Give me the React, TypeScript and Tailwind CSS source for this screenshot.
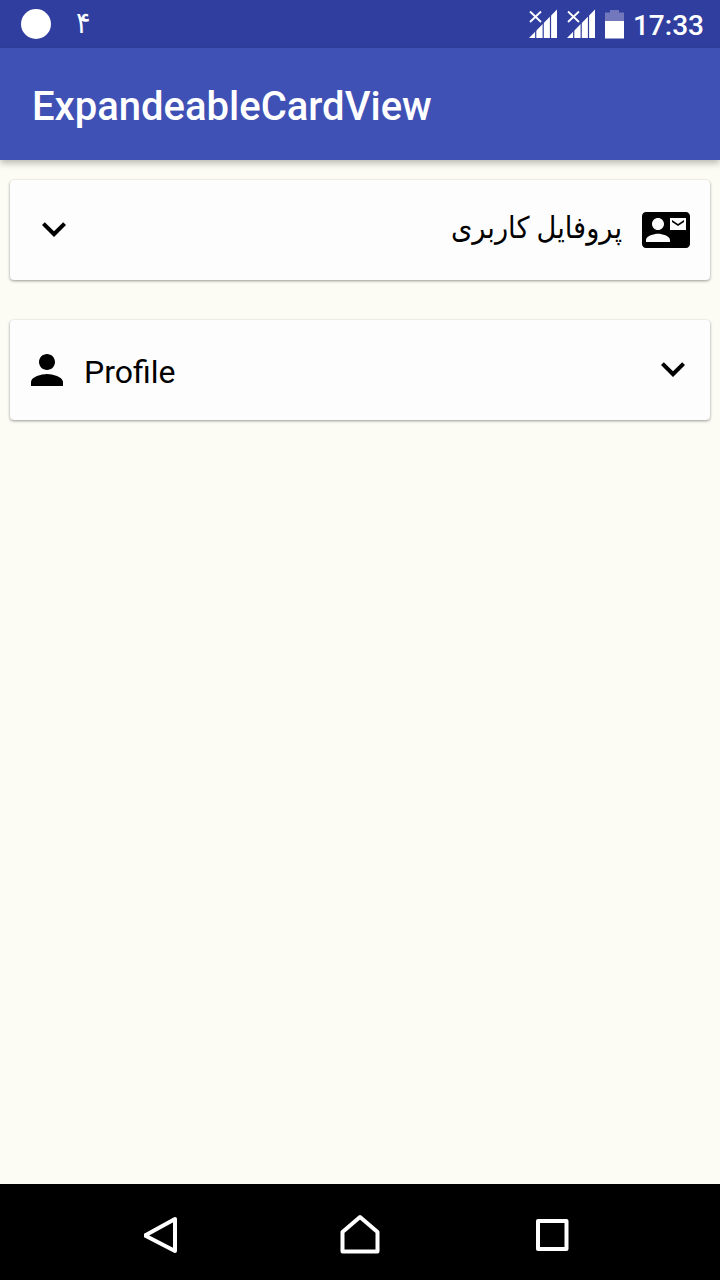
import React from "react";

function Signal() {
  return (
    <svg width="30" height="32" viewBox="0 0 30 32" className="block">
      <path d="M0 30L28 1.500V30Z" fill="#fff" />
      <path d="M6.7 12V32M14.2 4V32M21.500 0V32" stroke="#303f9f" strokeWidth="1.2" />
      <path d="M0 0H12.500V15H0Z" fill="#303f9f" />
      <path d="M1 3.500L12 14M12 3.500L1 14" stroke="#fff" strokeWidth="1.8" />
    </svg>
  );
}

function Chevron() {
  return (
    <svg width="48" height="48" viewBox="0 0 24 24" className="block">
      <path d="M16.59 8.59L12 13.17 7.41 8.59 6 10l6 6 6-6z" />
    </svg>
  );
}

function StatusBar() {
  return (
    <header className="flex h-12 items-center bg-[#303f9f] text-white">
      <div className="ml-[21px] size-[30px] rounded-full bg-white" />
      <span className="ml-[25px] origin-center scale-y-110 text-[27px] leading-[44px] font-['Noto_Sans','DejaVu_Sans',sans-serif] -mt-1">۴</span>
      <div className="ml-auto flex h-full pt-2">
        <div className="w-[38px]"><Signal /></div>
        <div className="w-[38px]"><Signal /></div>
        <svg width="20" height="32" viewBox="0 0 20 32" className="block">
          <path d="M0 4.500H5V2H14V4.500H19V13H0Z" fill="#7378bd" />
          <path d="M0 13H19V30.500H0Z" fill="#fff" />
        </svg>
      </div>
      <time className="mr-4 ml-[8px] pt-[3px] text-[28px] leading-[50px] font-medium">17:33</time>
    </header>
  );
}

export default function App() {
  return (
    <div className="flex h-[1280px] w-[720px] flex-col overflow-hidden bg-[#fcfcf5] font-[Roboto,sans-serif] text-black">
      <StatusBar />
      <div className="z-10 flex h-28 items-center bg-[#3f51b5] px-8 pt-[5px] shadow-[0_3px_7px_rgba(0,0,0,0.28)]">
        <h1 className="text-[40px] leading-none font-medium text-white">ExpandeableCardView</h1>
      </div>
      <main className="flex flex-1 flex-col gap-10 px-[10px] pt-5">
        <section className="flex h-[100px] justify-between rounded-[4px] bg-[#fdfdfd] pr-5 pl-5 shadow-[0_1px_3px_rgba(0,0,0,0.4)]">
          <div className="pt-[25px]"><Chevron /></div>
          <div className="flex">
            <span dir="rtl" lang="fa" className="mr-5 origin-center scale-y-110 text-[27.3px] leading-[93px] font-['Noto_Sans','DejaVu_Sans',sans-serif]">پروفایل کاربری</span>
            <svg width="48" height="48" viewBox="0 0 24 24" className="mt-[26px] block">
              <path d="M21 8V7l-3 2-3-2v1l3 2 3-2zm1-5H2C.9 3 0 3.9 0 5v14c0 1.1.9 2 2 2h20c1.1 0 1.99-.9 1.99-2L24 5c0-1.1-.9-2-2-2zM8 6c1.66 0 3 1.34 3 3s-1.34 3-3 3-3-1.34-3-3 1.34-3 3-3zm6 12H2v-1c0-2 4-3.1 6-3.1s6 1.1 6 3.1v1zm8-6h-8V6h8v6z" />
            </svg>
          </div>
        </section>
        <section className="flex h-[100px] justify-between rounded-[4px] bg-[#fdfdfd] pr-[13px] pl-[13px] shadow-[0_1px_3px_rgba(0,0,0,0.4)]">
          <div className="flex">
            <svg width="48" height="48" viewBox="0 0 24 24" className="mt-[26px] block">
              <path d="M12 12c2.21 0 4-1.79 4-4s-1.79-4-4-4-4 1.79-4 4 1.79 4 4 4zm0 2c-2.67 0-8 1.34-8 4v2h16v-2c0-2.66-5.33-4-8-4z" />
            </svg>
            <span className="ml-[13px] text-[32px] leading-[104px]">Profile</span>
          </div>
          <div className="pt-[25px]"><Chevron /></div>
        </section>
      </main>
      <nav className="flex h-24 items-center justify-center bg-black">
        <svg width="432" height="48" viewBox="0 0 432 48" fill="none" stroke="#fff" strokeWidth="4" strokeLinejoin="round">
          <path d="M31 11V43L1 27.500Z" />
          <path d="M198.500 24L216 9L233.500 24V43.500H198.500Z" />
          <path d="M394 13H422.500V41H394Z" />
        </svg>
      </nav>
    </div>
  );
}
